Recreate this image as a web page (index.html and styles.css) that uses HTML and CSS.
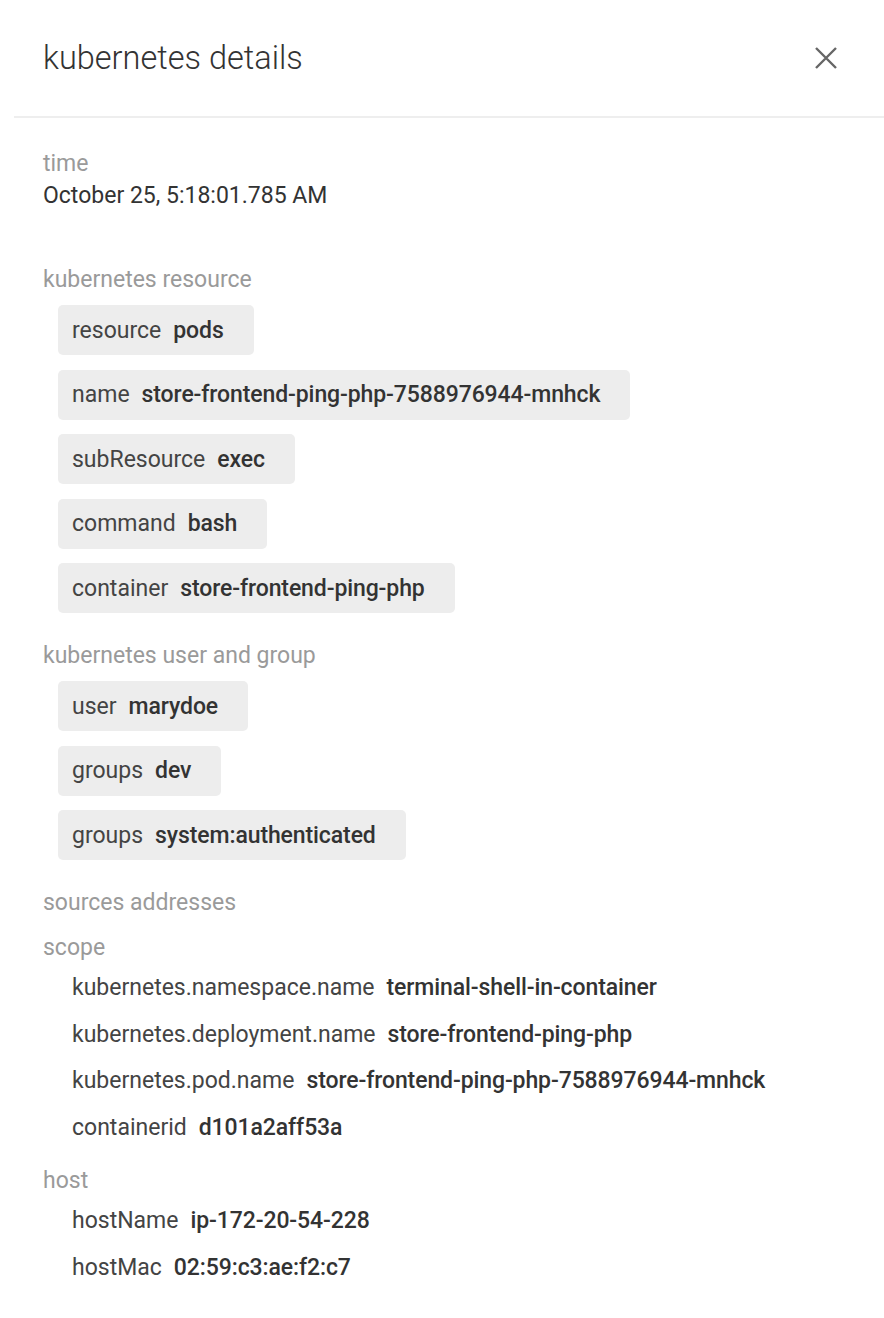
FILE: index.html
```html
<!DOCTYPE html>
<html>
<head>
<meta charset="utf-8">
<link rel="stylesheet" href="styles.css">
</head>
<body>
<div class="panel">
  <header class="header">
    <h1 class="title">kubernetes details</h1>
    <button class="close" aria-label="close">
      <svg width="22" height="22" viewBox="0 0 22 22"><path d="M1 1 L21 21 M21 1 L1 21" stroke="#666" stroke-width="2.4" fill="none"/></svg>
    </button>
  </header>
  <main class="content">
    <section class="time">
      <div class="label">time</div>
      <div class="value">October 25, 5:18:01.785 AM</div>
    </section>

    <section class="group">
      <div class="label">kubernetes resource</div>
      <div class="chips">
        <div class="chip"><span class="k">resource</span><span class="v">pods</span></div>
        <div class="chip"><span class="k">name</span><span class="v">store-frontend-ping-php-7588976944-mnhck</span></div>
        <div class="chip"><span class="k">subResource</span><span class="v">exec</span></div>
        <div class="chip"><span class="k">command</span><span class="v">bash</span></div>
        <div class="chip"><span class="k">container</span><span class="v">store-frontend-ping-php</span></div>
      </div>
    </section>

    <section class="group">
      <div class="label">kubernetes user and group</div>
      <div class="chips">
        <div class="chip"><span class="k">user</span><span class="v">marydoe</span></div>
        <div class="chip"><span class="k">groups</span><span class="v">dev</span></div>
        <div class="chip"><span class="k">groups</span><span class="v">system:authenticated</span></div>
      </div>
    </section>

    <section class="group">
      <div class="label">sources addresses</div>
    </section>

    <section class="group">
      <div class="label">scope</div>
      <div class="rows">
        <div class="row"><span class="k">kubernetes.namespace.name</span><span class="v">terminal-shell-in-container</span></div>
        <div class="row"><span class="k">kubernetes.deployment.name</span><span class="v">store-frontend-ping-php</span></div>
        <div class="row"><span class="k">kubernetes.pod.name</span><span class="v">store-frontend-ping-php-7588976944-mnhck</span></div>
        <div class="row"><span class="k">containerid</span><span class="v">d101a2aff53a</span></div>
      </div>
    </section>

    <section class="group">
      <div class="label">host</div>
      <div class="rows">
        <div class="row"><span class="k">hostName</span><span class="v">ip-172-20-54-228</span></div>
        <div class="row"><span class="k">hostMac</span><span class="v">02:59:c3:ae:f2:c7</span></div>
      </div>
    </section>
  </main>
</div>
</body>
</html>
```

FILE: styles.css
```css
* { box-sizing: border-box; }
html, body { margin: 0; padding: 0; background: #fff; }
body {
  font-family: Roboto, "Liberation Sans", sans-serif;
  color: #333;
}
.panel { width: 884px; }
.header {
  margin-left: 14px;
  height: 118px;
  border-bottom: 2px solid #eee;
  display: flex;
  align-items: center;
  justify-content: space-between;
  padding: 0 47px 0 29px;
}
.title {
  margin: 0;
  font-size: 32.5px;
  font-weight: 300;
  color: #333;
}
.close {
  border: 0;
  background: none;
  padding: 0;
  width: 22px;
  height: 22px;
  cursor: pointer;
  display: flex;
}
.content {
  padding: 30px 0 40px 43px;
  display: flex;
  flex-direction: column;
}
.label {
  font-size: 23px;
  color: #9a9a9a;
  line-height: 32px;
}
.value {
  font-size: 23px;
  color: #333;
  line-height: 32px;
}
.time { margin-bottom: 52px; }
.group { margin-bottom: 13px; }
.chips {
  display: flex;
  flex-direction: column;
  align-items: flex-start;
  gap: 14.5px;
  padding: 9px 0 14px 15px;
}
.chip {
  background: #ededed;
  border-radius: 5px;
  height: 50px;
  display: flex;
  align-items: center;
  padding: 0 30px 0 14px;
  font-size: 23px;
}
.k { color: #444; margin-right: 12px; }
.v { color: #333; font-weight: 500; letter-spacing: -0.1px; }
.rows {
  display: flex;
  flex-direction: column;
  padding: 1px 0 1px 29px;
}
.row {
  font-size: 23px;
  line-height: 46.5px;
}
```
